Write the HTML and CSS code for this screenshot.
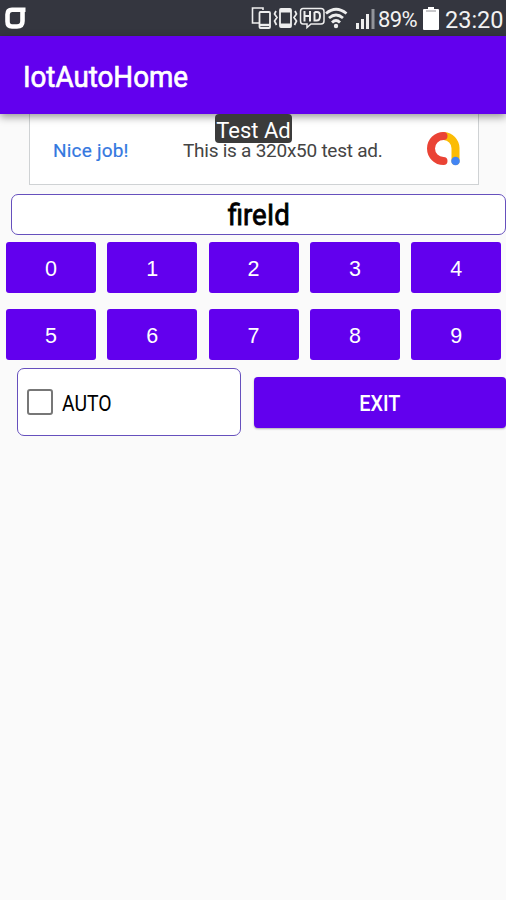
FILE: index.html
```
<!DOCTYPE html>
<html lang="en">
<head>
    <meta charset="UTF-8">
    <meta name="viewport" content="width=device-width, initial-scale=1.0">
    <title>IotAutoHome</title>
    <link rel="stylesheet" href="styles.css">
</head>
<body>

    <div class="statusBar">
        <svg class="carrier" width="24" height="26" viewBox="0 0 24 26">
            <path d="M21.500 4.700H8Q3.500 4.700 3.500 9.500V16.500Q3.500 21.500 8 21.500H13Q18.500 21.500 18.500 16V6" fill="none" stroke="#fff" stroke-width="4.600"/>
        </svg>
        <svg class="statusIcons" width="126" height="24" viewBox="0 0 126 24" fill="none" stroke="#eee">
            <!-- linked devices -->
            <path d="M8 17H1.5V2H12V4" stroke-width="1.6"/>
            <rect x="8.5" y="6" width="10.5" height="16" rx="1" fill="#34363f" stroke-width="1.8"/>
            <path d="M9 19H19" stroke-width="2.4"/>
            <!-- vibrate -->
            <rect x="29" y="3" width="11" height="18" rx="1" stroke-width="1.8"/>
            <path d="M29 5H40M29 19H40" stroke-width="3"/>
            <path d="M25 5L23.5 8L26 11.5L23.5 15L25.5 19M44 5L45.5 8L43 11.5L45.5 15L43.5 19" stroke-width="1.7"/>
            <!-- HD voice -->
            <path d="M52 2.500H70Q73 2.500 73 5.500V15Q73 18 70 18H60L56 21.500V18H52Q49.500 18 49.500 15V5.500Q49.500 2.500 52 2.500Z" stroke-width="1.500"/>
            <path d="M53.500 5V15.500M59 5V15.500M53.500 10H59M63.500 6V14.500H65.500Q69 14.500 69 10T65.500 6H63.500" stroke-width="2"/>
            <!-- wifi -->
            <path d="M75 7.500Q85 -1 95.500 7.500M78 12Q85 6 92 12M81 16.500Q85 12.500 89 16.500" stroke-width="2.8"/>
            <circle cx="85" cy="20" r="2.200" fill="#eee" stroke="none"/>
            <!-- signal -->
            <path d="M106.500 17V23M111.500 13V23M116.500 8V23" stroke-width="3"/>
            <path d="M122 3V23" stroke="#92949a" stroke-width="3"/>
        </svg>
        <span class="percent">89%</span>
        <svg class="battery" width="16" height="23" viewBox="0 0 16 23">
            <path d="M5 0H11V2H15Q16 2 16 3V22Q16 23 15 23H1Q0 23 0 22V3Q0 2 1 2H5Z" fill="#fff"/>
            <path d="M3 4H13" stroke="#b4b5b9" stroke-width="1.500"/>
        </svg>
        <span class="clock">23:20</span>
    </div>

    <header class="appBar">
        <h1>IotAutoHome</h1>
    </header>

    <div class="ad">
        <span class="adTitle">Nice job!</span>
        <span class="adText">This is a 320x50 test ad.</span>
        <svg class="adLogo" width="36" height="36" viewBox="0 0 36 36" fill="none" stroke-width="8" stroke-linecap="round">
            <path d="M18 5A12.500 12.500 0 0 1 29.500 17V30" stroke="#fbbc04"/>
            <path d="M17.500 5A12.500 12.500 0 0 0 17.500 30" stroke="#ea4335"/>
            <circle cx="29.500" cy="30" r="4.300" fill="#4285f4"/>
        </svg>
        <span class="adBadge">Test Ad</span>
    </div>

    <div class="fieldId"><span>fireId</span></div>

    <div class="keypad">
        <button class="key">0</button>
        <button class="key">1</button>
        <button class="key">2</button>
        <button class="key">3</button>
        <button class="key">4</button>
        <button class="key">5</button>
        <button class="key">6</button>
        <button class="key">7</button>
        <button class="key">8</button>
        <button class="key">9</button>
    </div>

    <div class="controls">
        <label class="auto">
            <input type="checkbox">
            <span>AUTO</span>
        </label>
        <button class="exit"><span>EXIT</span></button>
    </div>

</body>
</html>
```
FILE: styles.css
```
* {
    box-sizing: border-box;
}

body {
    margin: 0;
    height: 900px;
    overflow: hidden;
    background-color: #fafafa;
    color: #000;
    font-family: Roboto, sans-serif;
}

.statusBar {
    display: flex;
    align-items: center;
    height: 36px;
    padding-left: 4px;
    background-color: #34363f;
    color: #f2f2f2;
}

.carrier {
    margin: 0 223px 0 0;
    flex: none;
}

.statusIcons {
    flex: none;
}

.percent {
    width: 41px;
    margin-left: 1px;
    font-size: 22px;
    letter-spacing: -0.6px;
    padding-top: 3px;
}

.battery {
    margin-left: 4px;
    flex: none;
}

.clock {
    margin-left: 6px;
    padding-top: 3px;
    font-size: 23.500px;
}

.appBar {
    position: relative;
    z-index: 1;
    height: 78px;
    padding: 3px 0 0 23px;
    display: flex;
    align-items: center;
    background-color: #6200ee;
    box-shadow: 0 3px 8px rgba(0, 0, 0, 0.4);
}

.appBar h1 {
    margin: 0;
    color: #fff;
    font-size: 30px;
    font-weight: 400;
    -webkit-text-stroke: 0.7px #fff;
    transform: scaleX(0.925);
    transform-origin: left;
}

.ad {
    position: relative;
    display: flex;
    align-items: center;
    width: 450px;
    height: 71px;
    margin-left: 29px;
    padding-left: 23px;
    border: 1px solid #cfd2d4;
    border-top: none;
    background-color: #fff;
    font-size: 19px;
}

.adTitle {
    width: 130px;
    color: #3478df;
    letter-spacing: 0.2px;
    -webkit-text-stroke: 0.2px #3478df;
    padding-top: 2px;
}

.adText {
    width: 243px;
    padding-top: 2px;
    color: #444;
    letter-spacing: -0.25px;
    white-space: nowrap;
}

/* sits over the top edge of the banner */
.adBadge {
    position: absolute;
    z-index: 2;
    top: 0;
    left: 185px;
    width: 77px;
    height: 29px;
    border-radius: 4px;
    background-color: #3b3b3b;
    color: #fff;
    font-size: 22px;
    line-height: 33px;
    text-align: center;
}

.fieldId {
    height: 41px;
    margin: 9px 0 0 11px;
    border: 1.500px solid #6650bd;
    border-radius: 7px;
    background-color: #fff;
    font-size: 30px;
    line-height: 40px;
    text-align: center;
}

.fieldId span {
    display: inline-block;
    -webkit-text-stroke: 0.8px #000;
    transform: scaleX(0.92);
}

.keypad {
    display: grid;
    grid-template-columns: repeat(5, 90px);
    grid-auto-rows: 51px;
    column-gap: 11.300px;
    row-gap: 16px;
    margin: 7px 0 0 6px;
}

button {
    border: none;
    border-radius: 3px;
    padding: 0;
    background-color: #6200ee;
    color: #fff;
    font-family: Roboto, sans-serif;
    cursor: pointer;
}

.key {
    padding-top: 4px;
    font-family: "Liberation Sans", Arial, sans-serif;
    font-size: 21.500px;
}

.controls {
    display: flex;
    align-items: center;
    margin: 8px 0 0 17px;
}

.auto {
    display: flex;
    align-items: center;
    width: 224px;
    height: 68px;
    padding-left: 9px;
    border: 1.500px solid #6650bd;
    border-radius: 7px;
    background-color: #fff;
    font-size: 22px;
}

.auto input {
    appearance: none;
    width: 26px;
    height: 26px;
    margin: 0 9px 0 0;
    border: 2px solid #777;
    border-radius: 3px;
}

.auto span {
    padding-top: 2px;
    transform: scaleX(0.88);
    transform-origin: left;
}

.exit {
    flex: 1;
    height: 51px;
    margin-left: 13px;
    padding-top: 2px;
    border-radius: 4px;
    box-shadow: 0 1px 2px rgba(0, 0, 0, 0.3);
    font-size: 22px;
    font-weight: 500;
}

.exit span {
    display: inline-block;
    transform: scaleX(0.9);
}
```
